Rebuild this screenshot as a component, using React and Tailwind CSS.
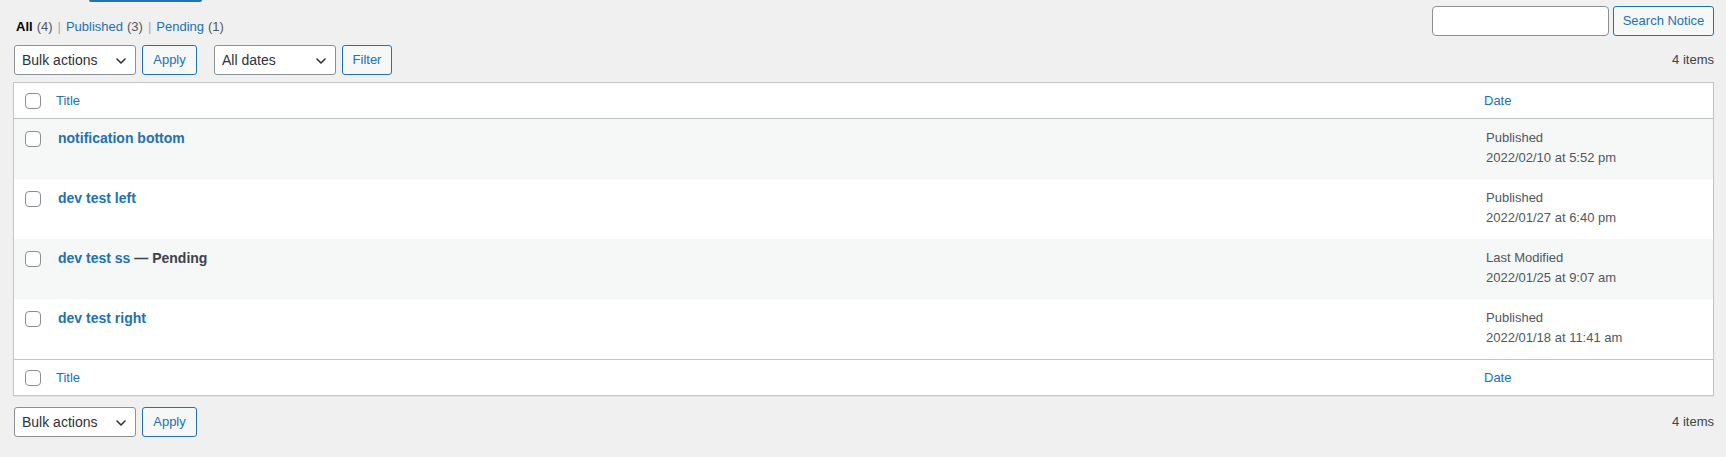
import React from "react";

const font = { fontFamily: '"Liberation Sans", Arial, sans-serif' };

function Chevron() {
  return (
    <svg width="20" height="20" viewBox="0 0 20 20" className="absolute right-[4px] top-[5px]">
      <path d="M6 8l4 4 4-4" fill="none" stroke="#2c3338" strokeWidth="1.6" strokeLinecap="round" strokeLinejoin="round" />
    </svg>
  );
}

function Select({ label, className = "" }) {
  return (
    <div className={"relative h-[30px] w-[122px] rounded-[3px] border border-[#8c8f94] bg-white pl-[7px] text-[14px] leading-[28px] text-[#2c3338] " + className}>
      {label}
      <Chevron />
    </div>
  );
}

function Button({ label, className = "" }) {
  return (
    <div className={"flex h-[30px] items-center justify-center rounded-[3px] border border-[#2271b1] bg-[#f6f7f7] text-[13px] text-[#2271b1] " + className}>
      {label}
    </div>
  );
}

function Checkbox() {
  return <div className="h-[16px] w-[16px] rounded-[4px] border border-[#8c8f94] bg-white" />;
}

const rows = [
  { title: "notification bottom", status: "Published", date: "2022/02/10 at 5:52 pm" },
  { title: "dev test left", status: "Published", date: "2022/01/27 at 6:40 pm" },
  { title: "dev test ss", pending: true, status: "Last Modified", date: "2022/01/25 at 9:07 am" },
  { title: "dev test right", status: "Published", date: "2022/01/18 at 11:41 am" },
];

function HeadRow({ border }) {
  return (
    <div className={"flex h-[36px] items-center text-[13px] text-[#2271b1] " + border}>
      <div className="flex w-[34px] shrink-0 pl-[11px]">
        <Checkbox />
      </div>
      <div className="flex-1 pl-[8px]">Title</div>
      <div className="w-[237px] shrink-0 pl-[8px]">Date</div>
    </div>
  );
}

function BulkBar() {
  return (
    <div className="flex items-center">
      <Select label="Bulk actions" className="ml-[1px]" />
      <Button label="Apply" className="ml-[6px] w-[55px]" />
    </div>
  );
}

export default function App() {
  return (
    <div className="min-h-screen w-full bg-[#f0f0f1] text-[13px] text-[#3c434a]" style={font}>
      <div className="pl-[13px] pr-[12px]">
        <div className="ml-[76px] h-[2px] w-[113px] rounded-b-[2px] bg-[#2271b1]" />
        <div className="mt-[4px] flex h-[30px] items-start justify-between">
          <div className="ml-[3px] mt-[11px] flex items-center leading-[20px]">
            <span className="font-semibold text-black">All</span>
            <span className="ml-[4px] text-[#50575e]">(4)</span>
            <span className="mx-[5px] text-[#a7aaad]">|</span>
            <span className="text-[#2271b1]">Published</span>
            <span className="ml-[4px] text-[#50575e]">(3)</span>
            <span className="mx-[5px] text-[#a7aaad]">|</span>
            <span className="text-[#2271b1]">Pending</span>
            <span className="ml-[4px] text-[#50575e]">(1)</span>
          </div>
          <div className="flex items-center gap-[4px]">
            <div className="h-[30px] w-[177px] rounded-[4px] border border-[#8c8f94] bg-white" />
            <Button label="Search Notice" className="w-[101px]" />
          </div>
        </div>

        <div className="mt-[9px] flex h-[30px] items-center justify-between">
          <div className="flex items-center">
            <BulkBar />
            <Select label="All dates" className="ml-[17px]" />
            <Button label="Filter" className="ml-[6px] w-[50px]" />
          </div>
          <div className="text-[13px] text-[#3c434a]">4 items</div>
        </div>

        <div className="mt-[7px] border border-[#c3c4c7] bg-white shadow-[0_1px_1px_rgba(0,0,0,0.04)]">
          <HeadRow border="border-b border-[#c3c4c7]" />
          {rows.map((r, i) => (
            <div key={i} className={"flex h-[60px] " + (i % 2 === 0 ? "bg-[#f6f7f7]" : "bg-white")}>
              <div className="w-[34px] shrink-0 pl-[11px] pt-[12px]">
                <Checkbox />
              </div>
              <div className="flex-1 pl-[10px] pt-[9px] text-[14px] font-semibold leading-[20px]">
                <span className="text-[#2271b1]">{r.title}</span>
                {r.pending && <span className="text-[#3c434a]"> — Pending</span>}
              </div>
              <div className="w-[237px] shrink-0 pl-[10px] pt-[9px] text-[13px] leading-[19.5px] text-[#50575e]">
                <div>{r.status}</div>
                <div>{r.date}</div>
              </div>
            </div>
          ))}
          <HeadRow border="border-t border-[#c3c4c7]" />
        </div>

        <div className="mt-[11px] flex h-[30px] items-center justify-between">
          <BulkBar />
          <div className="text-[13px] text-[#3c434a]">4 items</div>
        </div>
      </div>
    </div>
  );
}
